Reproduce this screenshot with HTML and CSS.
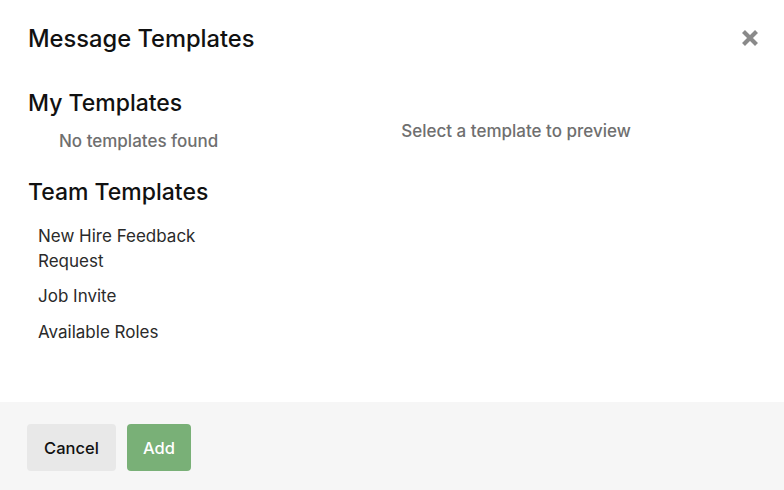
FILE: index.html
```html
<!DOCTYPE html>
<html>
<head>
<meta charset="utf-8">
<link rel="stylesheet" href="styles.css">
</head>
<body>
<div class="modal">
  <div class="header">
    <h1 class="title">Message Templates</h1>
    <button class="close" aria-label="Close">
      <svg width="18" height="18" viewBox="0 0 18 18"><path d="M2.5 2.5 L15.5 15.5 M15.5 2.5 L2.5 15.5" stroke="#8a8a8a" stroke-width="4.2" stroke-linecap="butt"/></svg>
    </button>
  </div>
  <div class="body">
    <div class="list">
      <h2 class="section">My Templates</h2>
      <div class="empty">No templates found</div>
      <h2 class="section team">Team Templates</h2>
      <ul class="items">
        <li>New Hire Feedback Request</li>
        <li>Job Invite</li>
        <li>Available Roles</li>
      </ul>
    </div>
    <div class="preview">Select a template to preview</div>
  </div>
  <div class="footer">
    <button class="btn cancel">Cancel</button>
    <button class="btn add">Add</button>
  </div>
</div>
</body>
</html>
```
FILE: styles.css
```css
* { box-sizing: border-box; }
html, body { margin: 0; padding: 0; background: #fff; }
body { font-family: Inter, "Noto Sans", sans-serif; color: #111; }
.modal { width: 784px; height: 490px; display: flex; flex-direction: column; }
.header { display: flex; justify-content: space-between; align-items: flex-start; padding: 24px 25px 0 28px; height: 88px; flex: none; }
.title { margin: 0; font-size: 23.7px; font-weight: 500; line-height: 30px; color: #111; }
.close { border: 0; background: none; padding: 0; margin-top: 5px; width: 18px; height: 18px; cursor: pointer; }
.close svg { display: block; }
.body { flex: 1; display: flex; padding: 0 0 0 28px; }
.list { width: 220px; }
.section { margin: 0; font-size: 23px; font-weight: 500; line-height: 30px; color: #111; }
.empty { padding-left: 31px; margin-top: 12px; font-size: 17px; color: #6f6f6f; font-weight: 500; line-height: 22px; }
.team { margin-top: 25px; }
.items { list-style: none; margin: 16.5px 0 0; padding: 0 0 0 10px; }
.items li { font-size: 17px; line-height: 25px; color: #2a2a2a; margin-bottom: 10.5px; }
.preview { flex: 1; text-align: center; padding-top: 32px; font-size: 17px; color: #6f6f6f; font-weight: 500; line-height: 22px; }
.footer { background: #f6f6f6; height: 88px; flex: none; display: flex; align-items: flex-start; padding: 22px 27px; gap: 11px; }
.btn { border: 0; border-radius: 4px; height: 47px; font-family: inherit; font-size: 16.5px; font-weight: 500; padding: 0; }
.cancel { background: #e8e8e8; color: #111; width: 89px; }
.add { background: #79b077; color: #fff; width: 64px; }
```
